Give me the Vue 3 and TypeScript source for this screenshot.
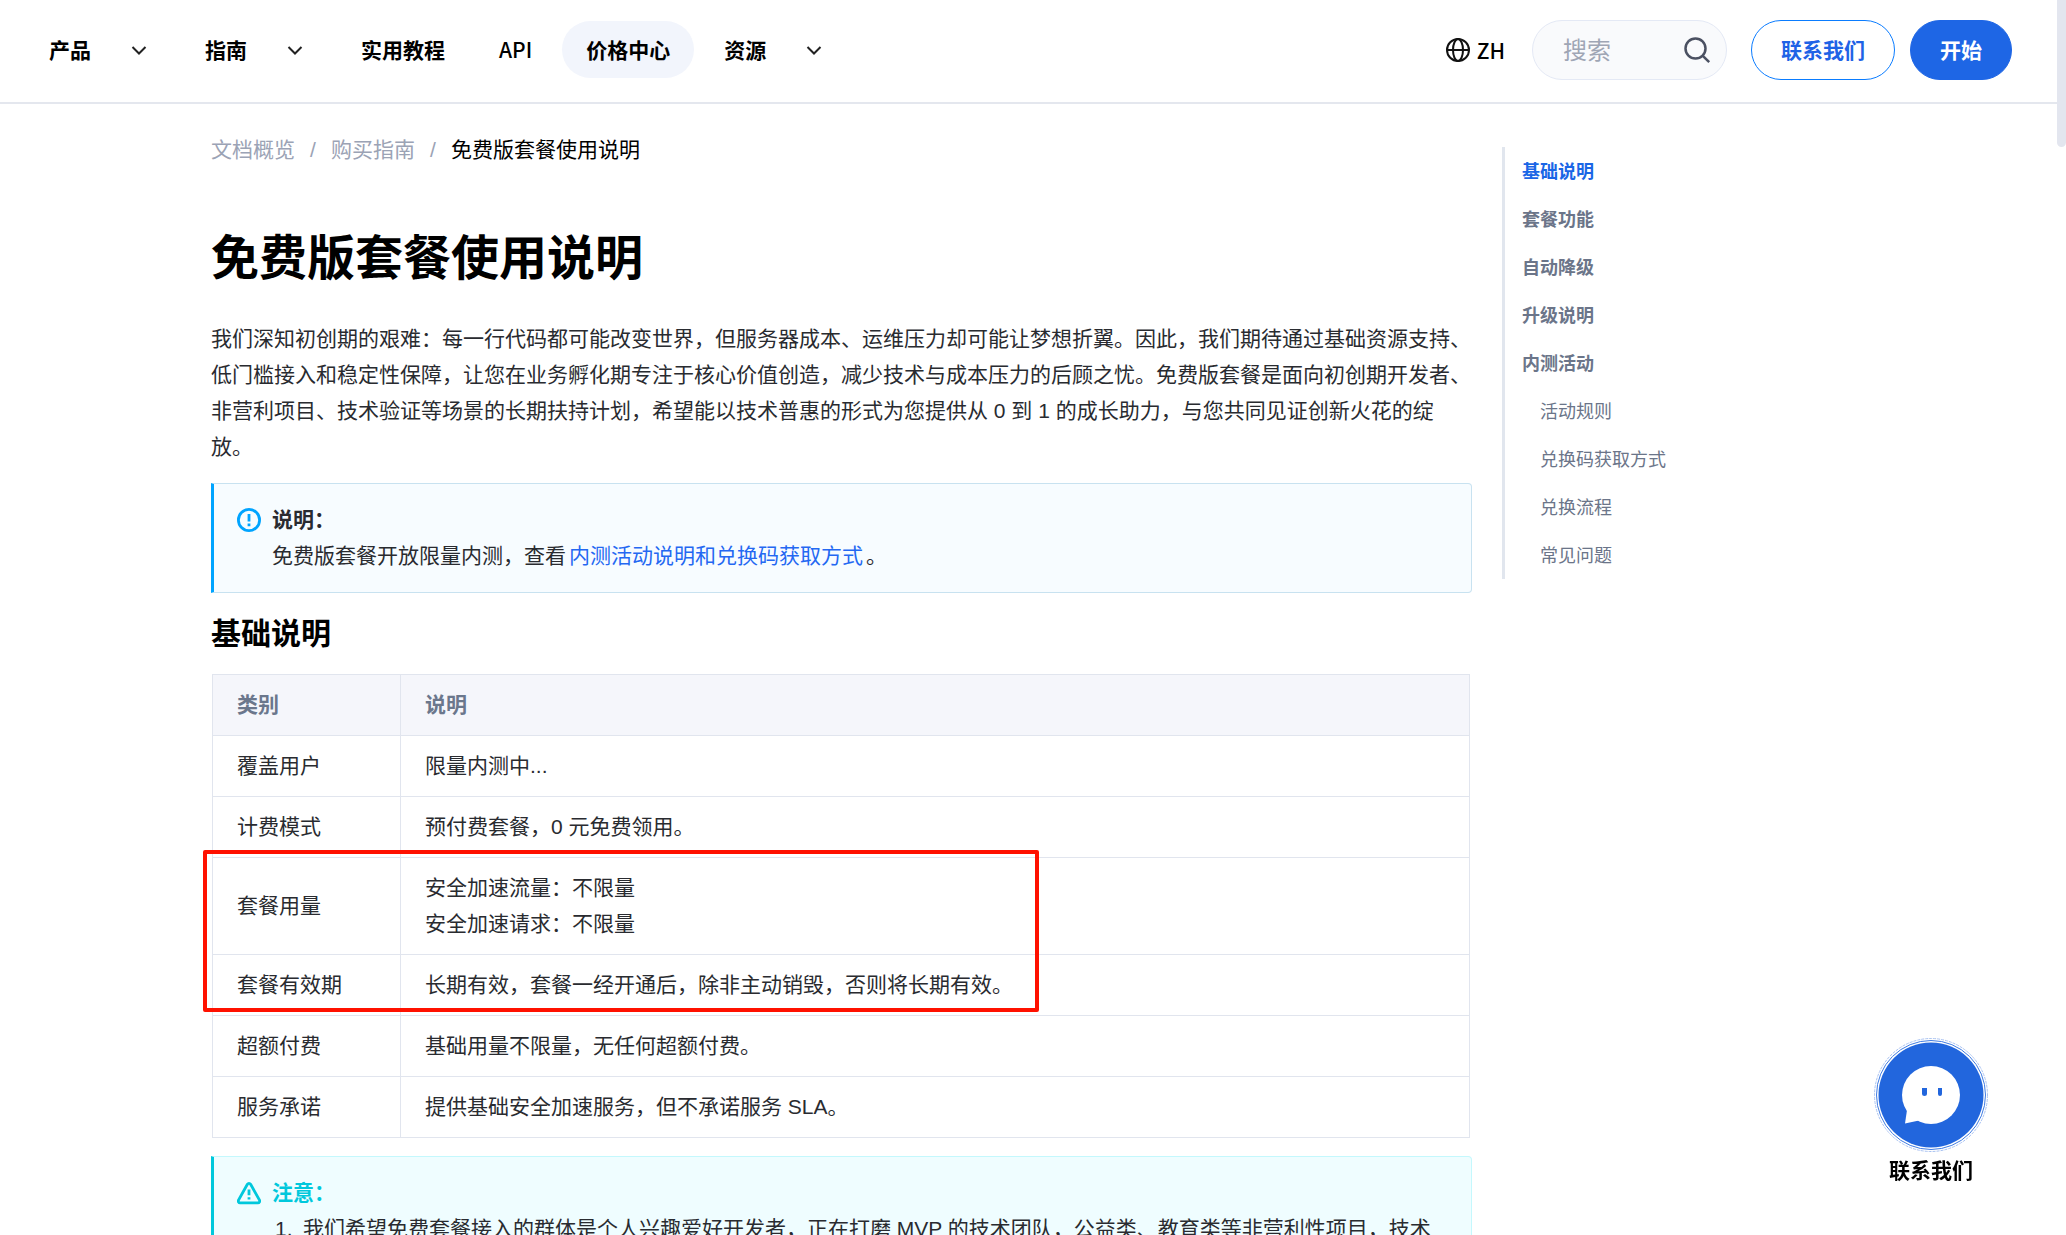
<script setup lang="ts">
interface NavItem {
  label: string
  menu?: boolean
  active?: boolean
}
interface TocItem {
  label: string
  sub?: boolean
  active?: boolean
}
interface Row {
  name: string
  lines: string[]
  framed?: boolean
}

const nav: NavItem[] = [
  { label: '产品', menu: true },
  { label: '指南', menu: true },
  { label: '实用教程' },
  { label: 'API' },
  { label: '价格中心', active: true },
  { label: '资源', menu: true },
]

const rows: Row[] = [
  { name: '覆盖用户', lines: ['限量内测中...'] },
  { name: '计费模式', lines: ['预付费套餐，0 元免费领用。'] },
  { name: '套餐用量', lines: ['安全加速流量：不限量', '安全加速请求：不限量'], framed: true },
  { name: '套餐有效期', lines: ['长期有效，套餐一经开通后，除非主动销毁，否则将长期有效。'] },
  { name: '超额付费', lines: ['基础用量不限量，无任何超额付费。'] },
  { name: '服务承诺', lines: ['提供基础安全加速服务，但不承诺服务 SLA。'] },
]

const toc: TocItem[] = [
  { label: '基础说明', active: true },
  { label: '套餐功能' },
  { label: '自动降级' },
  { label: '升级说明' },
  { label: '内测活动' },
  { label: '活动规则', sub: true },
  { label: '兑换码获取方式', sub: true },
  { label: '兑换流程', sub: true },
  { label: '常见问题', sub: true },
]
</script>

<template>
  <div class="page">
    <header class="header">
      <nav class="nav" aria-label="主导航">
        <a v-for="item in nav" :key="item.label" href="#" class="nav-item" :class="{ active: item.active }">
          <span>{{ item.label }}</span>
          <svg v-if="item.menu" class="chevron" viewBox="0 0 24 24" aria-hidden="true">
            <path d="M5.5 9l6.5 6.5L18.5 9" />
          </svg>
        </a>
      </nav>
      <div class="tools">
        <button type="button" class="lang">
          <svg viewBox="0 0 26 26" aria-hidden="true">
            <circle cx="13" cy="13" r="11" />
            <ellipse cx="13" cy="13" rx="5" ry="11" />
            <path d="M2 13h22" />
          </svg>
          <span>ZH</span>
        </button>
        <label class="search">
          <input type="text" placeholder="搜索" aria-label="搜索" />
          <svg viewBox="0 0 28 28" aria-hidden="true">
            <circle cx="12.5" cy="12.5" r="10" />
            <path d="M19.8 19.8l6.400 6.400" />
          </svg>
        </label>
        <button type="button" class="btn outline">联系我们</button>
        <button type="button" class="btn solid">开始</button>
      </div>
    </header>

    <div class="body">
      <main class="main">
        <nav class="crumbs" aria-label="面包屑">
          <a href="#">文档概览</a>
          <span class="slash">/</span>
          <a href="#">购买指南</a>
          <span class="slash">/</span>
          <span class="here">免费版套餐使用说明</span>
        </nav>

        <h1>免费版套餐使用说明</h1>
        <p class="intro">我们深知初创期的艰难：每一行代码都可能改变世界，但服务器成本、运维压力却可能让梦想折翼。因此，我们期待通过基础资源支持、低门槛接入和稳定性保障，让您在业务孵化期专注于核心价值创造，减少技术与成本压力的后顾之忧。免费版套餐是面向初创期开发者、非营利项目、技术验证等场景的长期扶持计划，希望能以技术普惠的形式为您提供从 0 到 1 的成长助力，与您共同见证创新火花的绽放。</p>

        <section class="note info">
          <svg class="note-icon" viewBox="0 0 24 24" aria-hidden="true">
            <circle cx="12" cy="12" r="10.6" />
            <path d="M12 6v7.4M12 15.6v2.6" />
          </svg>
          <div class="note-text">
            <strong>说明：</strong>
            <p>免费版套餐开放限量内测，查看<a href="#">内测活动说明和兑换码获取方式</a>。</p>
          </div>
        </section>

        <h2>基础说明</h2>
        <div class="table-wrap">
          <table class="table">
            <thead>
              <tr>
                <th scope="col" class="col-name">类别</th>
                <th scope="col">说明</th>
              </tr>
            </thead>
            <tbody>
              <tr v-for="row in rows" :key="row.name" :class="{ framed: row.framed }">
                <td>{{ row.name }}</td>
                <td>
                  <div v-for="line in row.lines" :key="line">{{ line }}</div>
                </td>
              </tr>
            </tbody>
          </table>
        </div>

        <section class="note notice">
          <svg class="note-icon" viewBox="0 0 24 24" aria-hidden="true">
            <path d="M10.4 3.2a1.9 1.9 0 0 1 3.2 0l8.900 15.900a1.900 1.900 0 0 1-1.600 2.800H3.100a1.900 1.900 0 0 1-1.600-2.800z" />
            <path d="M12 8.600v5.600M12 16.200v2.400" />
          </svg>
          <div class="note-text">
            <strong>注意：</strong>
            <ol>
              <li><span>我们希望免费套餐接入的群体是个人兴趣爱好开发者，正在打磨 MVP 的技术团队，公益类、教育类等非营利性项目，技术</span></li>
            </ol>
          </div>
        </section>
      </main>

      <aside class="toc">
        <a v-for="item in toc" :key="item.label" href="#" :class="{ active: item.active, sub: item.sub }">{{ item.label }}</a>
      </aside>
    </div>

    <button type="button" class="contact">
      <svg viewBox="0 0 116 116" aria-hidden="true">
        <circle cx="58" cy="58" r="56.5" fill="none" stroke="#a9c2f1" stroke-dasharray="3 1" />
        <circle cx="58" cy="58" r="54.5" fill="none" stroke="#3f7be2" />
        <circle cx="58" cy="58" r="52.5" fill="#2266dd" />
        <circle cx="58" cy="58" r="29" fill="#fff" />
        <path d="M34 73l-2 13.500 14-3z" fill="#fff" />
        <path d="M49 51h5v6q0 2-2.500 2t-2.500-2zM65 51h4v6q0 2-2 2t-2-2z" fill="#2266dd" />
      </svg>
      <span>联系我们</span>
    </button>
    <div class="scroll-thumb" aria-hidden="true"></div>
  </div>
</template>

<style>
html {
  height: 100%;
  overflow: hidden;
}
body {
  margin: 0;
  height: 100%;
}
#app {
  height: 100%;
}
</style>

<style scoped>
.page {
  position: relative;
  height: 100%;
  overflow: hidden;
  background: #fff;
  color: #292b30;
  font: 21px/36px "Liberation Sans", "Noto Sans CJK SC", sans-serif;
}
.page *,
.page *::before,
.page *::after {
  box-sizing: border-box;
}
a {
  color: inherit;
  text-decoration: none;
}
button,
input {
  font-family: inherit;
  margin: 0;
}
button {
  cursor: pointer;
  font-size: 21px;
}
.header {
  display: flex;
  align-items: center;
  justify-content: space-between;
  height: 104px;
  margin-right: 9px;
  padding: 0 45px 3px 25px;
  border-bottom: 2px solid #e4e7ee;
  color: #000;
}
.nav {
  display: flex;
  gap: 6px;
}
.nav-item {
  display: flex;
  align-items: center;
  height: 57px;
  padding: 0 24px;
  border-radius: 29px;
  font-weight: 700;
  white-space: nowrap;
  font-family: "Noto Sans CJK SC", sans-serif;
}
.nav-item span {
  padding-bottom: 2px;
}
.nav-item:nth-child(4) {
  font-weight: 500;
}
.nav-item.active {
  background: #f2f5fc;
}
.chevron {
  width: 24px;
  height: 24px;
  margin-left: 36px;
  fill: none;
  stroke: #222;
  stroke-width: 2;
}
.tools {
  display: flex;
  align-items: center;
}
.lang {
  display: flex;
  align-items: center;
  gap: 6px;
  margin-right: 27px;
  padding: 0;
  border: 0;
  background: none;
  color: #000;
  font-family: "Noto Sans CJK SC", sans-serif;
  font-weight: 500;
}
.lang svg {
  width: 26px;
  height: 26px;
  fill: none;
  stroke: #111;
  stroke-width: 2;
}
.search {
  display: flex;
  align-items: center;
  width: 195px;
  height: 60px;
  margin-right: 24px;
  padding: 0 15px 0 30px;
  border: 1px solid #e4e9f5;
  border-radius: 30px;
  background: #f9fafc;
}
.search input {
  flex: 1;
  min-width: 0;
  padding: 2px 0 0;
  border: 0;
  outline: 0;
  background: none;
  font-size: 24px;
}
.search input::placeholder {
  color: #9fa6b5;
  opacity: 1;
}
.search svg {
  width: 28px;
  height: 28px;
  fill: none;
  stroke: #4b5162;
  stroke-width: 2.5;
}
.btn {
  height: 60px;
  padding: 0 29px 2px;
  border: 1px solid #1e66e5;
  border-radius: 30px;
  font-weight: 700;
}
.btn.outline {
  margin-right: 15px;
  background: #fff;
  border-color: #0a7cff;
  color: #1f63e6;
}
.btn.solid {
  background: #1e66e5;
  color: #fff;
}
.body {
  display: flex;
  align-items: flex-start;
  gap: 30px;
  padding: 28px 0 0 211px;
}
.main {
  flex: 0 1 1261px;
}
.crumbs {
  display: flex;
  color: #9ba3b5;
}
.slash {
  width: 36px;
  text-align: center;
}
.here {
  color: #000;
}
h1 {
  margin: 52px 0 0;
  color: #000;
  font-size: 48px;
  line-height: 78px;
}
.intro {
  margin: 23px 0 0;
}
.note {
  display: flex;
  gap: 11px;
  padding: 18px 24px 18px 23px;
  border: 1px solid;
  border-left: 3px solid;
  border-radius: 0 4px 4px 0;
}
.note-icon {
  flex: none;
  width: 24px;
  height: 24px;
  margin-top: 6px;
  fill: none;
  stroke: #00a4ff;
  stroke-width: 2.8;
  stroke-linejoin: round;
}
.note-text {
  flex: 1;
  min-width: 0;
}
.note strong {
  display: block;
}
.note p {
  margin: 0;
}
.note.info {
  margin-top: 18px;
  background: #f7fcff;
  border-color: #c8e2f0 #c8e2f0 #c8e2f0 #00a4ff;
}
.note.info a {
  margin: 0 3px;
  color: #2468f2;
}
.note.notice {
  margin-top: 18px;
  background: #effdff;
  border-color: #c4f8fd #c4f8fd #c4f8fd #00c8dc;
}
.notice strong {
  color: #00c8dc;
}
.notice .note-icon {
  stroke: #00c8dc;
}
.notice ol {
  margin: 0;
  padding-left: 3px;
  list-style: none;
  counter-reset: item;
}
.notice li {
  display: flex;
  counter-increment: item;
}
.notice li::before {
  content: counter(item) ".";
  flex: none;
  width: 28px;
}
h2 {
  margin: 18px 0;
  color: #000;
  font-size: 30px;
  line-height: 45px;
}
.table-wrap {
  padding-left: 1px;
}
.table {
  width: 100%;
  border-collapse: collapse;
}
.table th,
.table td {
  padding: 12px 24px;
  border: 1px solid #e1e5ee;
  text-align: left;
  vertical-align: middle;
}
.table th {
  background: #f5f6fb;
  color: #6b778c;
}
.table .col-name {
  width: 188px;
}
/* Highlight frame drawn over this row and the next one */
.framed {
  position: relative;
}
.framed::after {
  content: "";
  position: absolute;
  top: -8px;
  left: -10px;
  width: 836px;
  height: 162px;
  border: 4px solid #ff1100;
  border-radius: 2px;
}
.toc {
  display: flex;
  flex-direction: column;
  margin-top: 15px;
  padding-left: 17px;
  border-left: 3px solid #e1e6ee;
  color: #6b7589;
  font-size: 18px;
  line-height: 45px;
  font-weight: 700;
}
.toc a {
  padding-top: 3px;
}
.toc .sub {
  padding-left: 18px;
  font-weight: 400;
}
.toc .active {
  color: #1a66e6;
}
.contact {
  position: fixed;
  right: 77px;
  bottom: 46px;
  display: flex;
  flex-direction: column;
  align-items: center;
  padding: 0;
  border: 0;
  background: none;
  color: #000;
  font-weight: 700;
  line-height: 36px;
}
.contact svg {
  width: 116px;
  height: 116px;
}
.scroll-thumb {
  position: fixed;
  top: 0;
  right: 0;
  width: 9px;
  height: 147px;
  border-radius: 0 0 5px 5px;
  background: #e3e6ef;
}
</style>
